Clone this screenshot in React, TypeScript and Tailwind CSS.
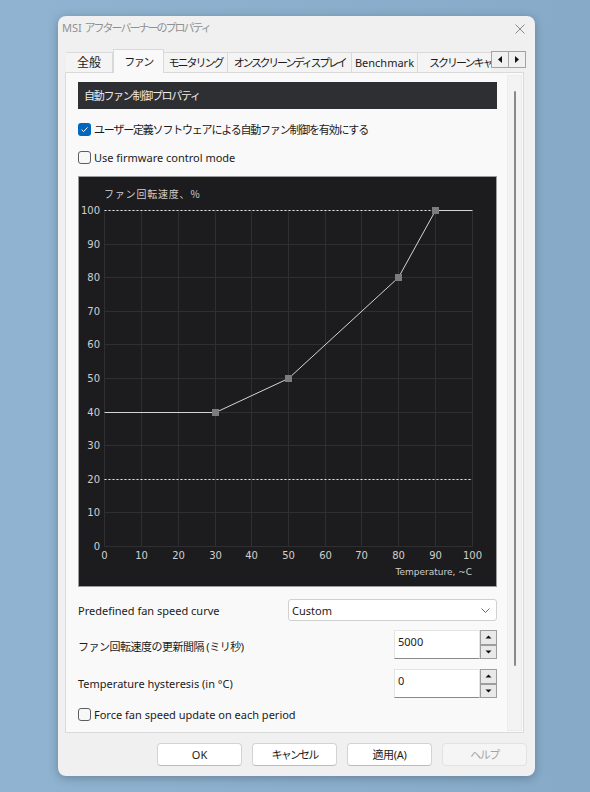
import React from "react";

const ui = "font-['Noto_Sans','Noto_Sans_CJK_JP',sans-serif]";

function Check({ checked, label, jp }: { checked?: boolean; label: string; jp?: string }) {
  return (
    <div className="flex h-[13px] items-center">
      {checked ? (
        <span className="flex h-[13px] w-[13px] shrink-0 items-center justify-center rounded-[3px] bg-[#0067c0]">
          <svg width="9" height="9" viewBox="0 0 9 9">
            <path d="M1.6 4.7 L3.6 6.6 L7.5 2.4" fill="none" stroke="#ffffff" strokeWidth="1" />
          </svg>
        </span>
      ) : (
        <span className="h-[13px] w-[13px] shrink-0 rounded-[3px] border border-[#5e5e5e] bg-[#f7f7f7]" />
      )}
      <span className={`ml-[3px] whitespace-nowrap text-[11px] leading-none text-[#1b1b1b] ${jp ?? ""}`}>{label}</span>
    </div>
  );
}

function FanChart() {
  const ticks = [0, 10, 20, 30, 40, 50, 60, 70, 80, 90, 100];
  const x = (t: number) => Math.round(25.3 + t * 3.674) + 0.5;
  const y = (p: number) => Math.round(369 - p * 3.36) + 0.5;
  const pts: [number, number][] = [
    [0, 40],
    [30, 40],
    [50, 50],
    [80, 80],
    [90, 100],
    [100, 100],
  ];
  const nodes = pts.slice(1, 5);
  const label = "#cfcfcf";
  return (
    <svg width="417" height="409" className="block">
      {/* grid */}
      {ticks.map((t) => (
        <line key={"v" + t} x1={x(t)} x2={x(t)} y1={y(100)} y2={y(0)} stroke="#2f2f32" />
      ))}
      {ticks.map((p) => (
        <line key={"h" + p} x1={x(0)} x2={x(100)} y1={y(p)} y2={y(p)} stroke="#2f2f32" />
      ))}
      {/* limits */}
      <line x1={x(0)} x2={x(90)} y1={y(100)} y2={y(100)} stroke="#e6e6e6" strokeDasharray="2 2" />
      <line x1={x(0)} x2={x(100)} y1={y(20)} y2={y(20)} stroke="#e6e6e6" strokeDasharray="2 2" />
      {/* curve */}
      <polyline
        points={pts.map(([t, p]) => `${x(t)},${y(p)}`).join(" ")}
        fill="none"
        stroke="#d4d4d4"
        strokeWidth="1"
      />
      {nodes.map(([t, p]) => (
        <rect key={"n" + t} x={x(t) - 3.5} y={y(p) - 3.5} width="7" height="7" fill="#7c7c7c" />
      ))}
      {/* labels */}
      <text
        x="25"
        y="21"
        fill={label}
        fontSize="10"
        letterSpacing="0.8"
        fontFamily="'Noto Sans CJK JP', sans-serif"
      >
        ファン回転速度、%
      </text>
      {ticks.map((p) => (
        <text
          key={"yl" + p}
          x="21"
          y={y(p) + 3.5}
          fill={label}
          fontSize="10"
          textAnchor="end"
          fontFamily="'DejaVu Sans', sans-serif"
        >
          {p}
        </text>
      ))}
      {ticks.map((t) => (
        <text
          key={"xl" + t}
          x={x(t)}
          y="382"
          fill={label}
          fontSize="10"
          textAnchor="middle"
          fontFamily="'DejaVu Sans', sans-serif"
        >
          {t}
        </text>
      ))}
      <text
        x="393"
        y="398"
        fill={label}
        fontSize="9"
        textAnchor="end"
        fontFamily="'DejaVu Sans', sans-serif"
      >
        Temperature, ~C
      </text>
    </svg>
  );
}

function SpinBtn({ up }: { up?: boolean }) {
  return (
    <div className="flex h-[14.5px] w-[17px] items-center justify-center border border-[#9d9d9d] bg-[#e9e9e9]">
      <svg width="7" height="4" viewBox="0 0 7 4">
        {up ? <path d="M0.5 3.5 L3.5 0.5 L6.5 3.5 Z" fill="#111" /> : <path d="M0.5 0.5 L3.5 3.5 L6.5 0.5 Z" fill="#111" />}
      </svg>
    </div>
  );
}

function Spin({ value }: { value: string }) {
  return (
    <div className="flex h-[29px] w-[103px]">
      <div className="flex-1 border border-[#e4e4e4] border-b-[#8a8a8a] bg-white pl-[3px] pt-[3px] text-[11px] leading-[16px] text-[#1b1b1b]">
        {value}
      </div>
      <div className="flex flex-col">
        <SpinBtn up />
        <SpinBtn />
      </div>
    </div>
  );
}

function Tab({ label, w, active, jp }: { label: string; w: string; active?: boolean; jp?: string }) {
  return active ? (
    <div
      className={`relative z-10 flex h-[24px] shrink-0 items-start justify-center whitespace-nowrap border border-b-0 border-[#d9d9d9] bg-[#f9f9f9] pt-[4px] text-[11px] leading-[16px] text-[#1b1b1b] ${w} ${jp ?? ""}`}
    >
      {label}
    </div>
  ) : (
    <div
      className={`-ml-px flex h-[21px] shrink-0 items-center justify-center whitespace-nowrap border border-[#d9d9d9] bg-[#f4f4f4] text-[11px] leading-none text-[#1b1b1b] ${w} ${jp ?? ""}`}
    >
      {label}
    </div>
  );
}

function ArrowBtn({ left }: { left?: boolean }) {
  return (
    <div className="-ml-px flex h-[17px] w-[18px] items-center justify-center border border-[#a3a3a3] bg-[#f0f0f0]">
      <svg width="4" height="7" viewBox="0 0 4 7">
        {left ? <path d="M4 0 L0 3.5 L4 7 Z" fill="#111" /> : <path d="M0 0 L4 3.5 L0 7 Z" fill="#111" />}
      </svg>
    </div>
  );
}

function Btn({ label, disabled, jp }: { label: string; disabled?: boolean; jp?: string }) {
  return (
    <div
      className={`flex h-[23px] w-[85px] items-center justify-center rounded-[4px] border text-[11px] leading-none ${jp ?? ""} ${
        disabled
          ? "border-[#e2e2e2] bg-[#f5f5f5] text-[#a3a3a3]"
          : "border-[#d3d3d3] border-b-[#bdbdbd] bg-white text-[#1b1b1b]"
      }`}
    >
      {label}
    </div>
  );
}

export default function App() {
  return (
    <div className={`min-h-[792px] w-full bg-gradient-to-r from-[#8fb3d0] to-[#86aac8] pt-[16px] ${ui}`}>
      <div className="ml-[58px] flex h-[760px] w-[477px] flex-col rounded-lg bg-[#f0f0f0] shadow-[0_2px_10px_rgba(0,0,0,0.25)]">
        {/* title bar */}
        <div className="flex h-[33px] items-start justify-between pl-[4px] pr-[10px] pt-[4px]">
          <span className="whitespace-nowrap text-[11px] leading-[16px] text-[#909090]">
            MSI <span className="tracking-[-2px]">アフターバーナーのプロパティ</span>
          </span>
          <svg width="10" height="10" viewBox="0 0 10 10" className="mt-[4px]">
            <path d="M0.5 0.5 L9.5 9.5 M9.5 0.5 L0.5 9.5" stroke="#8a8a8a" strokeWidth="1" />
          </svg>
        </div>

        {/* tabs */}
        <div className="relative z-10 ml-[8px] flex h-[24px] items-start">
          <div className="flex h-[24px] w-[425px] items-end overflow-hidden">
            <Tab label="全般" w="w-[48px]" jp="text-[12px]" />
            <Tab label="ファン" w="w-[51px]" active jp="tracking-[-1.5px]" />
            <Tab label="モニタリング" w="w-[65px]" jp="tracking-[-2px]" />
            <Tab label="オンスクリーンディスプレイ" w="w-[125px]" jp="tracking-[-2.3px]" />
            <Tab label="Benchmark" w="w-[67px]" />
            <div className="-ml-px flex h-[21px] w-[90px] shrink-0 items-center whitespace-nowrap border border-[#d9d9d9] bg-[#f4f4f4] pl-[11px] text-[11px] leading-none tracking-[-2px] text-[#1b1b1b]">
              スクリーンキャプチャ
            </div>
          </div>
          <div className="ml-px mt-[2px] flex">
            <ArrowBtn left />
            <ArrowBtn />
          </div>
        </div>

        {/* panel */}
        <div className="relative z-0 -mt-px ml-[7px] flex h-[661px] w-[459px] border border-[#dadada] bg-[#f9f9f9]">
          <div className="ml-[12px] flex w-[419px] flex-col pt-[9px]">
            <div className="flex h-[27px] items-center bg-[#2e2f33] pl-[6px] text-[11px] leading-none tracking-[-1.3px] text-[#ececec]">
              自動ファン制御プロパティ
            </div>
            <div className="mt-[14px]">
              <Check checked label="ユーザー定義ソフトウェアによる自動ファン制御を有効にする" jp="tracking-[-1.2px]" />
            </div>
            <div className="mt-[15px]">
              <Check label="Use firmware control mode" />
            </div>
            <div className="mt-[12px] h-[411px] border border-[#9c9c9c] bg-[#1c1c1e]">
              <FanChart />
            </div>
            <div className="mt-[12px] flex h-[22px] items-center justify-between">
              <span className="text-[11px] leading-none text-[#1b1b1b]">Predefined fan speed curve</span>
              <div className="flex h-[22px] w-[209px] items-center justify-between rounded-[3px] border border-[#d0d0d0] bg-white pl-[3px] pr-[6px]">
                <span className="text-[11px] leading-none text-[#1b1b1b]">Custom</span>
                <svg width="9" height="5" viewBox="0 0 9 5">
                  <path d="M0.5 0.5 L4.5 4.5 L8.5 0.5" fill="none" stroke="#6a6a6a" strokeWidth="1" />
                </svg>
              </div>
            </div>
            <div className="mt-[9px] flex h-[29px] items-center justify-between">
              <span className="whitespace-nowrap pt-[3px] text-[11px] leading-none tracking-[-0.5px] text-[#1b1b1b]">
                ファン回転速度の更新間隔 (ミリ秒)
              </span>
              <Spin value="5000" />
            </div>
            <div className="mt-[10px] flex h-[29px] items-center justify-between">
              <span className="text-[11px] leading-none text-[#1b1b1b]">Temperature hysteresis (in °C)</span>
              <Spin value="0" />
            </div>
            <div className="mt-[10px]">
              <Check label="Force fan speed update on each period" />
            </div>
          </div>
          {/* scrollbar */}
          <div className="mb-px ml-auto mr-px mt-[2px] flex w-[15px] justify-center border border-[#ececec] bg-[#f3f3f3]">
            <div className="mt-[15px] h-[575px] w-[2px] rounded-full bg-[#8a8a8a]" />
          </div>
        </div>

        {/* buttons */}
        <div className="mt-[10px] flex justify-end gap-[10px] pr-[8px]">
          <Btn label="OK" />
          <Btn label="キャンセル" jp="tracking-[-1.8px]" />
          <Btn label="適用(A)" jp="tracking-[-0.3px]" />
          <Btn label="ヘルプ" disabled jp="tracking-[-1.5px]" />
        </div>
      </div>
    </div>
  );
}
